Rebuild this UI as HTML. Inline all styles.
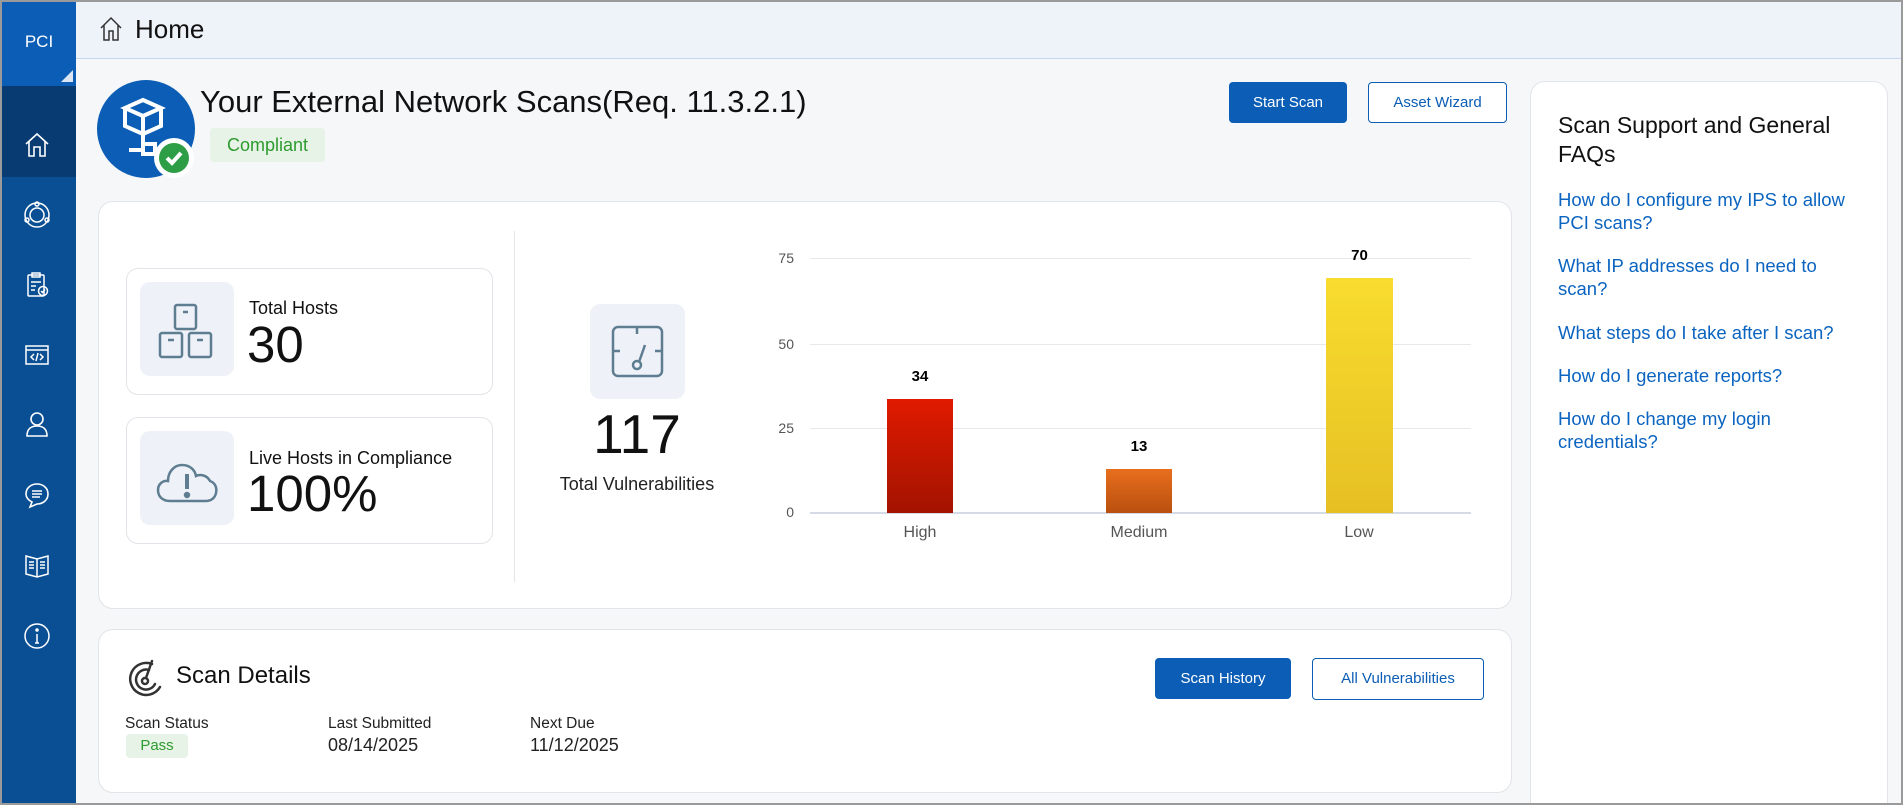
<!DOCTYPE html>
<html><head><meta charset="utf-8"><style>
*{margin:0;padding:0;box-sizing:border-box}
body{width:1903px;height:805px;overflow:hidden;background:#9a9a9a;font-family:"Liberation Sans",Arial,sans-serif;position:relative}
.frame{position:absolute;left:2px;top:2px;width:1899px;height:801px;background:#f6f7f9;overflow:hidden}
.a{position:absolute}
.side{left:0;top:0;width:74px;height:801px;background:#0a4f94}
.pci{left:0;top:0;width:74px;height:84px;background:#0b5db5;color:#fff;font-size:17px;text-align:center;line-height:80px}
.act{left:0;top:84px;width:74px;height:91px;background:#083b72}
.hdr{left:74px;top:0;right:0;height:57px;background:#eef2f9;border-bottom:1px solid #c5d7ee}
.card{background:#fff;border:1px solid #e1e4e8;border-radius:15px}
.btnp{background:#0b5db5;color:#fff;border-radius:4px;font-size:15px;text-align:center}
.btno{background:#fff;color:#0b5db5;border:1.5px solid #0b5db5;border-radius:4px;font-size:15px;text-align:center}
.ibox{background:#eef2f8;border-radius:10px}
.lnk{color:#0b64c0;font-size:18.5px;line-height:23px}
.yl{font-size:14px;color:#555;text-align:right;width:30px}
.gl{height:1px;background:#e6e8ec;left:808px;width:661px}
</style></head><body><div class="frame">
<div class="a side"></div>
<div class="a pci">PCI</div>
<svg class="a" style="left:59px;top:68px" width="12" height="12"><path d="M12 0L12 12L0 12Z" fill="#dce6f3"/></svg>
<div class="a act"></div>
<svg class="a" style="left:20px;top:128px" width="30" height="30" viewBox="0 0 30 30" fill="none" stroke="#fff" stroke-width="1.6"><path d="M4 14L15 4L26 14M7 11V26H12V17H18V26H23V11"/></svg>
<svg class="a" style="left:20px;top:198px" width="30" height="30" viewBox="0 0 30 30" fill="none" stroke="#fff" stroke-width="1.5"><circle cx="15" cy="15" r="12"/><circle cx="15" cy="15" r="7"/><circle cx="15" cy="4" r="2"/><circle cx="5" cy="20" r="2"/><circle cx="25" cy="20" r="2"/></svg>
<svg class="a" style="left:20px;top:268px" width="30" height="30" viewBox="0 0 30 30" fill="none" stroke="#fff" stroke-width="1.5"><rect x="6" y="5" width="16" height="21" rx="1"/><rect x="10" y="3" width="8" height="4"/><path d="M9 12H19M9 16H14M9 20H13"/><circle cx="21" cy="21" r="4.5"/><path d="M19 21L20.5 22.5L23 19.5"/></svg>
<svg class="a" style="left:20px;top:338px" width="30" height="30" viewBox="0 0 30 30" fill="none" stroke="#fff" stroke-width="1.5"><rect x="4" y="6" width="22" height="18"/><path d="M4 10H26M12 14L9 17L12 20M18 14L21 17L18 20M16 13L14 21"/></svg>
<svg class="a" style="left:20px;top:407px" width="30" height="30" viewBox="0 0 30 30" fill="none" stroke="#fff" stroke-width="1.6"><circle cx="15" cy="10" r="6"/><path d="M5 27C5 20 9 17 15 17C21 17 25 20 25 27Z"/></svg>
<svg class="a" style="left:20px;top:478px" width="30" height="30" viewBox="0 0 30 30" fill="none" stroke="#fff" stroke-width="1.6"><path d="M15 4C21 4 26 8 26 14C26 20 21 24 15 24L8 27L10 22C6 20 4 17 4 14C4 8 9 4 15 4Z"/><path d="M10 11H20M10 14H20M10 17H18"/></svg>
<svg class="a" style="left:20px;top:548px" width="30" height="30" viewBox="0 0 30 30" fill="none" stroke="#fff" stroke-width="1.5"><path d="M4 6L15 9L26 6V24L15 27L4 24Z M15 9V27M7 12H12M7 15H12M7 18H12M18 12H23M18 15H23M18 18H23"/></svg>
<svg class="a" style="left:20px;top:619px" width="30" height="30" viewBox="0 0 30 30" fill="none" stroke="#fff" stroke-width="1.5"><circle cx="15" cy="15" r="12"/><path d="M15 13V22M13 22H17"/><circle cx="15" cy="9" r="1" fill="#fff"/></svg>
<div class="a hdr"></div>
<svg class="a" style="left:97px;top:14px" width="24" height="26" viewBox="0 0 24 26" fill="none" stroke="#333" stroke-width="1.5"><path d="M2 12L12 2L22 12M5 9V24H10V15H14V24H19V9"/></svg>
<div class="a" style="left:133px;top:12px;font-size:26px;color:#111">Home</div>
<svg class="a" style="left:95px;top:78px" width="102" height="102" viewBox="0 0 102 102"><circle cx="49" cy="49" r="49" fill="#0b5db5"/><g fill="none" stroke="#fff" stroke-width="4"><path d="M28 28L46 20L64 28L46 36Z M28 28V46L46 54V36M64 28V46L46 54M46 54V64M32 70H44M46 64H58V74H46Z"/></g><circle cx="77" cy="78" r="20" fill="#fff"/><circle cx="77" cy="78" r="15" fill="#2e9e46"/><path d="M70 78L75 83L84 73" fill="none" stroke="#fff" stroke-width="4"/></svg>
<div class="a" style="left:198px;top:82px;font-size:31px;color:#111">Your External Network Scans(Req. 11.3.2.1)</div>
<div class="a" style="left:208px;top:126px;width:115px;height:34px;background:#e7f3e7;border-radius:4px;color:#2e9b2e;font-size:18px;text-align:center;line-height:34px">Compliant</div>
<div class="a btnp" style="left:1227px;top:80px;width:118px;height:41px;line-height:41px">Start Scan</div>
<div class="a btno" style="left:1366px;top:80px;width:139px;height:41px;line-height:39px">Asset Wizard</div>
<div class="a card" style="left:96px;top:199px;width:1414px;height:408px"></div>
<div class="a card" style="left:124px;top:266px;width:367px;height:127px;border-radius:12px"></div>
<div class="a ibox" style="left:138px;top:280px;width:94px;height:94px"></div>
<svg class="a" style="left:150px;top:300px" width="70" height="58" viewBox="0 0 70 58" fill="none" stroke="#5f7d91" stroke-width="2.5"><rect x="23" y="3" width="21" height="24" rx="2"/><rect x="8" y="31" width="22" height="24" rx="2"/><rect x="37" y="31" width="22" height="24" rx="2"/><path d="M31 10H36M16 38H22M45 38H51"/></svg>
<div class="a" style="left:247px;top:296px;font-size:18px;color:#111">Total Hosts</div>
<div class="a" style="left:245px;top:313px;font-size:51px;color:#111">30</div>
<div class="a card" style="left:124px;top:415px;width:367px;height:127px;border-radius:12px"></div>
<div class="a ibox" style="left:138px;top:429px;width:94px;height:94px"></div>
<svg class="a" style="left:152px;top:452px" width="66" height="52" viewBox="0 0 66 52" fill="none" stroke="#5f7d91" stroke-width="2.5"><path d="M16 47C8 47 4 42 4 36C4 30 9 26 14 27C14 18 20 11 28 11C36 11 41 16 42 22C46 20 53 21 56 27C62 29 63 35 62 39C61 44 57 47 52 47Z"/><path d="M33 20V35" stroke-width="4"/><circle cx="33" cy="41" r="2" fill="#5f7d91"/></svg>
<div class="a" style="left:247px;top:446px;font-size:18px;color:#111">Live Hosts in Compliance</div>
<div class="a" style="left:245px;top:462px;font-size:51px;color:#111">100%</div>
<div class="a" style="left:512px;top:229px;width:1px;height:351px;background:#e3e5e8"></div>
<div class="a ibox" style="left:588px;top:302px;width:95px;height:95px"></div>
<svg class="a" style="left:603px;top:317px" width="65" height="65" viewBox="0 0 65 65" fill="none" stroke="#5f7d91" stroke-width="2.5"><rect x="8" y="8" width="49" height="49" rx="5"/><path d="M32 8V15M8 32H15M50 32H57M34 43L40 26"/><circle cx="32" cy="46" r="4"/></svg>
<div class="a" style="left:560px;top:400px;width:150px;text-align:center;font-size:55px;color:#111">117</div>
<div class="a" style="left:540px;top:472px;width:190px;text-align:center;font-size:18px;color:#222">Total Vulnerabilities</div>
<div class="a gl" style="top:256px"></div>
<div class="a gl" style="top:342px"></div>
<div class="a gl" style="top:426px"></div>
<div class="a gl" style="top:510px;height:2px;background:#d4dbe6"></div>
<div class="a yl" style="left:762px;top:248px">75</div>
<div class="a yl" style="left:762px;top:334px">50</div>
<div class="a yl" style="left:762px;top:418px">25</div>
<div class="a yl" style="left:762px;top:502px">0</div>
<div class="a" style="left:885px;top:397px;width:66px;height:114px;background:linear-gradient(#e01a00,#a31300)"></div>
<div class="a" style="left:1104px;top:467px;width:66px;height:44px;background:linear-gradient(#e86e1e,#b9500f)"></div>
<div class="a" style="left:1324px;top:276px;width:67px;height:235px;background:linear-gradient(#f8dc2e,#e6c023)"></div>
<div class="a" style="left:885px;top:366px;width:66px;text-align:center;font-size:15px;font-weight:bold">34</div>
<div class="a" style="left:1104px;top:436px;width:66px;text-align:center;font-size:15px;font-weight:bold">13</div>
<div class="a" style="left:1324px;top:245px;width:67px;text-align:center;font-size:15px;font-weight:bold">70</div>
<div class="a" style="left:868px;top:522px;width:100px;text-align:center;font-size:16px;color:#555">High</div>
<div class="a" style="left:1087px;top:522px;width:100px;text-align:center;font-size:16px;color:#555">Medium</div>
<div class="a" style="left:1307px;top:522px;width:100px;text-align:center;font-size:16px;color:#555">Low</div>
<div class="a card" style="left:96px;top:627px;width:1414px;height:164px"></div>
<svg class="a" style="left:124px;top:655px" width="42" height="42" viewBox="0 0 42 42" fill="none" stroke="#333" stroke-width="2.5" stroke-linecap="round"><path d="M26 7A16 16 0 1 0 34 30"/><path d="M23 13A10 10 0 1 0 29 27"/><circle cx="19" cy="24" r="3"/><path d="M20 21L26 4"/></svg>
<div class="a" style="left:174px;top:660px;font-size:24px;color:#111">Scan Details</div>
<div class="a" style="left:123px;top:713px;font-size:15.5px;color:#222">Scan Status</div>
<div class="a" style="left:124px;top:732px;width:62px;height:24px;background:#e7f3e7;border-radius:4px;color:#2e9b2e;font-size:15px;text-align:center;line-height:24px">Pass</div>
<div class="a" style="left:326px;top:713px;font-size:15.5px;color:#222">Last Submitted</div>
<div class="a" style="left:326px;top:733px;font-size:18px;color:#222">08/14/2025</div>
<div class="a" style="left:528px;top:713px;font-size:15.5px;color:#222">Next Due</div>
<div class="a" style="left:528px;top:733px;font-size:18px;color:#222">11/12/2025</div>
<div class="a btnp" style="left:1153px;top:656px;width:136px;height:41px;line-height:41px">Scan History</div>
<div class="a btno" style="left:1310px;top:656px;width:172px;height:42px;line-height:40px">All Vulnerabilities</div>
<div class="a card" style="left:1528px;top:79px;width:358px;height:740px"></div>
<div class="a" style="left:1556px;top:109px;font-size:23px;line-height:29px;color:#111">Scan Support and General<br>FAQs</div>
<div class="a lnk" style="left:1556px;top:186px">How do I configure my IPS to allow<br>PCI scans?</div>
<div class="a lnk" style="left:1556px;top:252px">What IP addresses do I need to<br>scan?</div>
<div class="a lnk" style="left:1556px;top:319px">What steps do I take after I scan?</div>
<div class="a lnk" style="left:1556px;top:362px">How do I generate reports?</div>
<div class="a lnk" style="left:1556px;top:405px">How do I change my login<br>credentials?</div>
</div></body></html>
